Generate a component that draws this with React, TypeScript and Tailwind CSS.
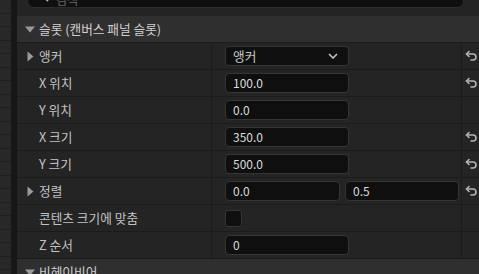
import React from "react";

const font = { fontFamily: '"Noto Sans CJK KR", "Noto Sans", sans-serif' };

function ResetIcon() {
  return (
    <svg width="13" height="12" viewBox="0 0 13 12" fill="none" stroke="#b4b4b4" strokeWidth="1.6" strokeLinecap="round" strokeLinejoin="round">
      <path d="M4 1.5 1.5 4 4 6.5" />
      <path d="M1.5 4h6.5a3 3 0 0 1 0 6H6" />
    </svg>
  );
}

function Triangle({ down }: { down?: boolean }) {
  return down ? (
    <svg width="10" height="7" viewBox="0 0 10 7"><path d="M0 0.5h10L5 6.5z" fill="#9a9a9a" /></svg>
  ) : (
    <svg width="7" height="11" viewBox="0 0 7 11"><path d="M0.5 0.5v10l6-5z" fill="#9a9a9a" /></svg>
  );
}

function Input({ value, className = "w-[124px]" }: { value: string; className?: string }) {
  return (
    <div className={`${className} h-[20px] rounded-[4px] bg-[#0f0f0f] border border-[#353535] flex items-center pl-[7px] text-[12px] text-[#dcdcdc]`}>
      {value}
    </div>
  );
}

function Row({ label, expand, reset, children }: { label: string; expand?: boolean; reset?: boolean; children?: React.ReactNode }) {
  return (
    <div className="h-[27px] shrink-0 flex border-b border-[#1b1b1b] bg-[#242424]">
      <div className="w-[195px] flex items-center border-r border-[#1b1b1b]">
        <div className="w-[22px] flex justify-end pr-[5px]">{expand && <Triangle />}</div>
        <span className="text-[12.7px] text-[#c2c2c2]">{label}</span>
      </div>
      <div className="w-[250px] flex items-center gap-[5px] pl-[13px] border-r border-[#1b1b1b]">{children}</div>
      <div className="flex-1 flex items-center justify-center pl-[1px]">{reset && <ResetIcon />}</div>
    </div>
  );
}

function Header({ title }: { title: string }) {
  return (
    <div className="h-[27px] shrink-0 flex items-center bg-[#2f2f2f] border-b border-[#1b1b1b]">
      <div className="w-[22px] flex justify-end pr-[4px]"><Triangle down /></div>
      <span className="text-[12.7px] text-[#d0d0d0]">{title}</span>
    </div>
  );
}

export default function App() {
  const stripRows = Array.from({ length: 20 });
  return (
    <div className="w-[479px] h-[274px] overflow-hidden flex bg-[#1a1a1a]" style={font}>
      <div className="w-[11px] flex flex-col bg-[#282828]">
        {stripRows.map((_, i) => (
          <div key={i} className="h-[13.5px] shrink-0 border-b border-[#1e1e1e]" />
        ))}
      </div>
      <div className="w-[6px] bg-[#171717]" />
      <div className="flex-1 flex flex-col bg-[#242424]">
        <div className="h-[16px] shrink-0 pl-[10px] pr-[15px]">
          <div className="-mt-[14px] h-[22px] rounded-[7px] bg-[#0f0f0f] border border-[#2c2c2c] flex items-end pl-[8px] pb-[1px] gap-[6px]">
            <svg width="14" height="14" viewBox="0 0 14 14" fill="none" stroke="#b0b0b0" strokeWidth="1.8"><circle cx="6" cy="3" r="4" /><path d="M9 6l3 3" /></svg>
            <span className="text-[12px] text-[#6a6a6a] leading-[12px]">검색</span>
          </div>
        </div>
        <Header title="슬롯 (캔버스 패널 슬롯)" />
        <Row label="앵커" expand reset>
          <div className="w-[124px] h-[20px] rounded-[4px] bg-[#0f0f0f] border border-[#353535] flex items-center justify-between pl-[7px] pr-[10px] text-[12.7px] text-[#c8c8c8]">
            <span>앵커</span>
            <svg width="10" height="6" viewBox="0 0 10 6" fill="none" stroke="#c8c8c8" strokeWidth="1.5"><path d="M1 1l4 4 4-4" /></svg>
          </div>
        </Row>
        <Row label="X 위치" reset><Input value="100.0" /></Row>
        <Row label="Y 위치"><Input value="0.0" /></Row>
        <Row label="X 크기" reset><Input value="350.0" /></Row>
        <Row label="Y 크기" reset><Input value="500.0" /></Row>
        <Row label="정렬" expand reset>
          <Input value="0.0" className="w-[115px]" />
          <Input value="0.5" className="w-[114px]" />
        </Row>
        <Row label="콘텐츠 크기에 맞춤">
          <div className="w-[17px] h-[17px] rounded-[3px] bg-[#0f0f0f] border border-[#353535]" />
        </Row>
        <Row label="Z 순서"><Input value="0" /></Row>
        <Header title="비헤이비어" />
      </div>
    </div>
  );
}
